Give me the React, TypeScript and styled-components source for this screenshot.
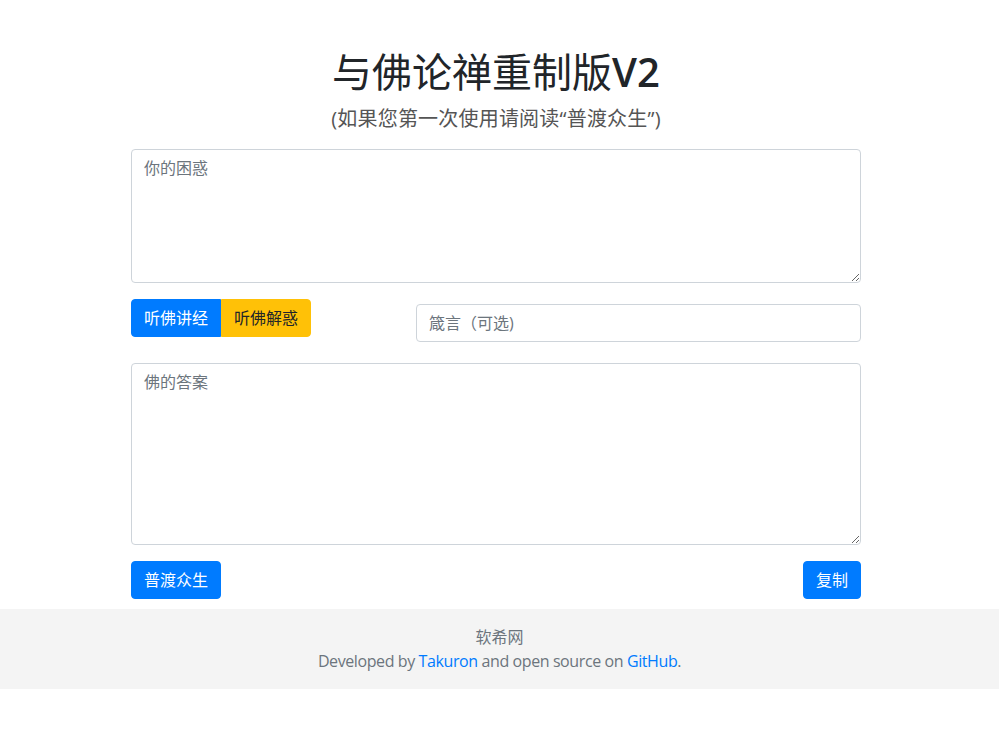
import React from "react";
import styled, { createGlobalStyle } from "styled-components";

const Global = createGlobalStyle`
  html, body { margin: 0; padding: 0; background: #fff; }
  body {
    font-family: "Open Sans", "Noto Sans CJK SC", sans-serif;
    font-size: 16px;
    line-height: 1.5;
    color: #212529;
  }
  * { box-sizing: border-box; }
`;

const Main = styled.main`
  padding: 48px 7px 0 0;
`;

const Container = styled.div`
  width: 730px;
  margin: 0 auto;
`;

const Title = styled.h1`
  margin: 0 0 8px;
  text-align: center;
  font-size: 40px;
  line-height: 48px;
  font-weight: 400;
  color: #212529;
`;

const Version = styled.span`
  font-weight: 600;
`;

const Subtitle = styled.p`
  margin: 0 0 15px;
  text-align: center;
  font-size: 20px;
  line-height: 30px;
  color: #555;
  letter-spacing: 0.2px;
`;

const TextArea = styled.textarea<{ $h: number }>`
  display: block;
  width: 100%;
  height: ${(p) => p.$h}px;
  padding: 6px 12px;
  border: 1px solid #ced4da;
  border-radius: 4px;
  font-family: "Open Sans", "Noto Sans CJK SC", sans-serif;
  font-size: 16px;
  line-height: 1.5;
  color: #495057;
  background: #fff;
  &::placeholder { color: #6c757d; }
`;

const ControlRow = styled.div`
  display: grid;
  grid-template-columns: 285px 1fr;
  align-items: start;
  margin: 16px 0 21px;
`;

const Group = styled.div`
  display: flex;
`;

const Btn = styled.button<{ $variant: "primary" | "warning"; $pos?: "first" | "last" }>`
  height: 38px;
  padding: 0 12px;
  border: 1px solid ${(p) => (p.$variant === "primary" ? "#007bff" : "#ffc107")};
  background: ${(p) => (p.$variant === "primary" ? "#007bff" : "#ffc107")};
  color: ${(p) => (p.$variant === "primary" ? "#fff" : "#212529")};
  font-family: "Open Sans", "Noto Sans CJK SC", sans-serif;
  font-size: 16px;
  line-height: 1.5;
  border-radius: ${(p) =>
    p.$pos === "first" ? "4px 0 0 4px" : p.$pos === "last" ? "0 4px 4px 0" : "4px"};
  cursor: pointer;
`;

const Input = styled.input`
  display: block;
  width: 100%;
  height: 38px;
  margin-top: 5px;
  padding: 6px 12px;
  border: 1px solid #ced4da;
  border-radius: 4px;
  font-family: "Open Sans", "Noto Sans CJK SC", sans-serif;
  font-size: 16px;
  color: #495057;
  &::placeholder { color: #6c757d; }
`;

const ActionRow = styled.div`
  display: flex;
  justify-content: space-between;
  margin: 16px 0 10px;
`;

const Footer = styled.footer`
  background: #f4f4f4;
  padding: 16px 0;
  text-align: center;
  color: #6c757d;
  font-size: 16px;
  line-height: 24px;
`;

const FootLine = styled.div<{ $tight?: boolean }>`
  letter-spacing: ${(p) => (p.$tight ? "-0.4px" : "0")};
`;

const Link = styled.a`
  color: #007bff;
  text-decoration: none;
`;

export default function App() {
  return (
    <>
      <Global />
      <Main>
        <Container>
          <Title>
            与佛论禅重制版<Version>V2</Version>
          </Title>
          <Subtitle>(如果您第一次使用请阅读“普渡众生”)</Subtitle>
          <TextArea $h={134} placeholder="你的困惑" />
          <ControlRow>
            <Group>
              <Btn $variant="primary" $pos="first">听佛讲经</Btn>
              <Btn $variant="warning" $pos="last">听佛解惑</Btn>
            </Group>
            <Input placeholder="箴言（可选)" />
          </ControlRow>
          <TextArea $h={182} placeholder="佛的答案" />
          <ActionRow>
            <Btn $variant="primary">普渡众生</Btn>
            <Btn $variant="primary">复制</Btn>
          </ActionRow>
        </Container>
      </Main>
      <Footer>
        <FootLine>软希网</FootLine>
        <FootLine $tight>
          Developed by <Link href="#">Takuron</Link> and open source on{" "}
          <Link href="#">GitHub</Link>.
        </FootLine>
      </Footer>
    </>
  );
}
